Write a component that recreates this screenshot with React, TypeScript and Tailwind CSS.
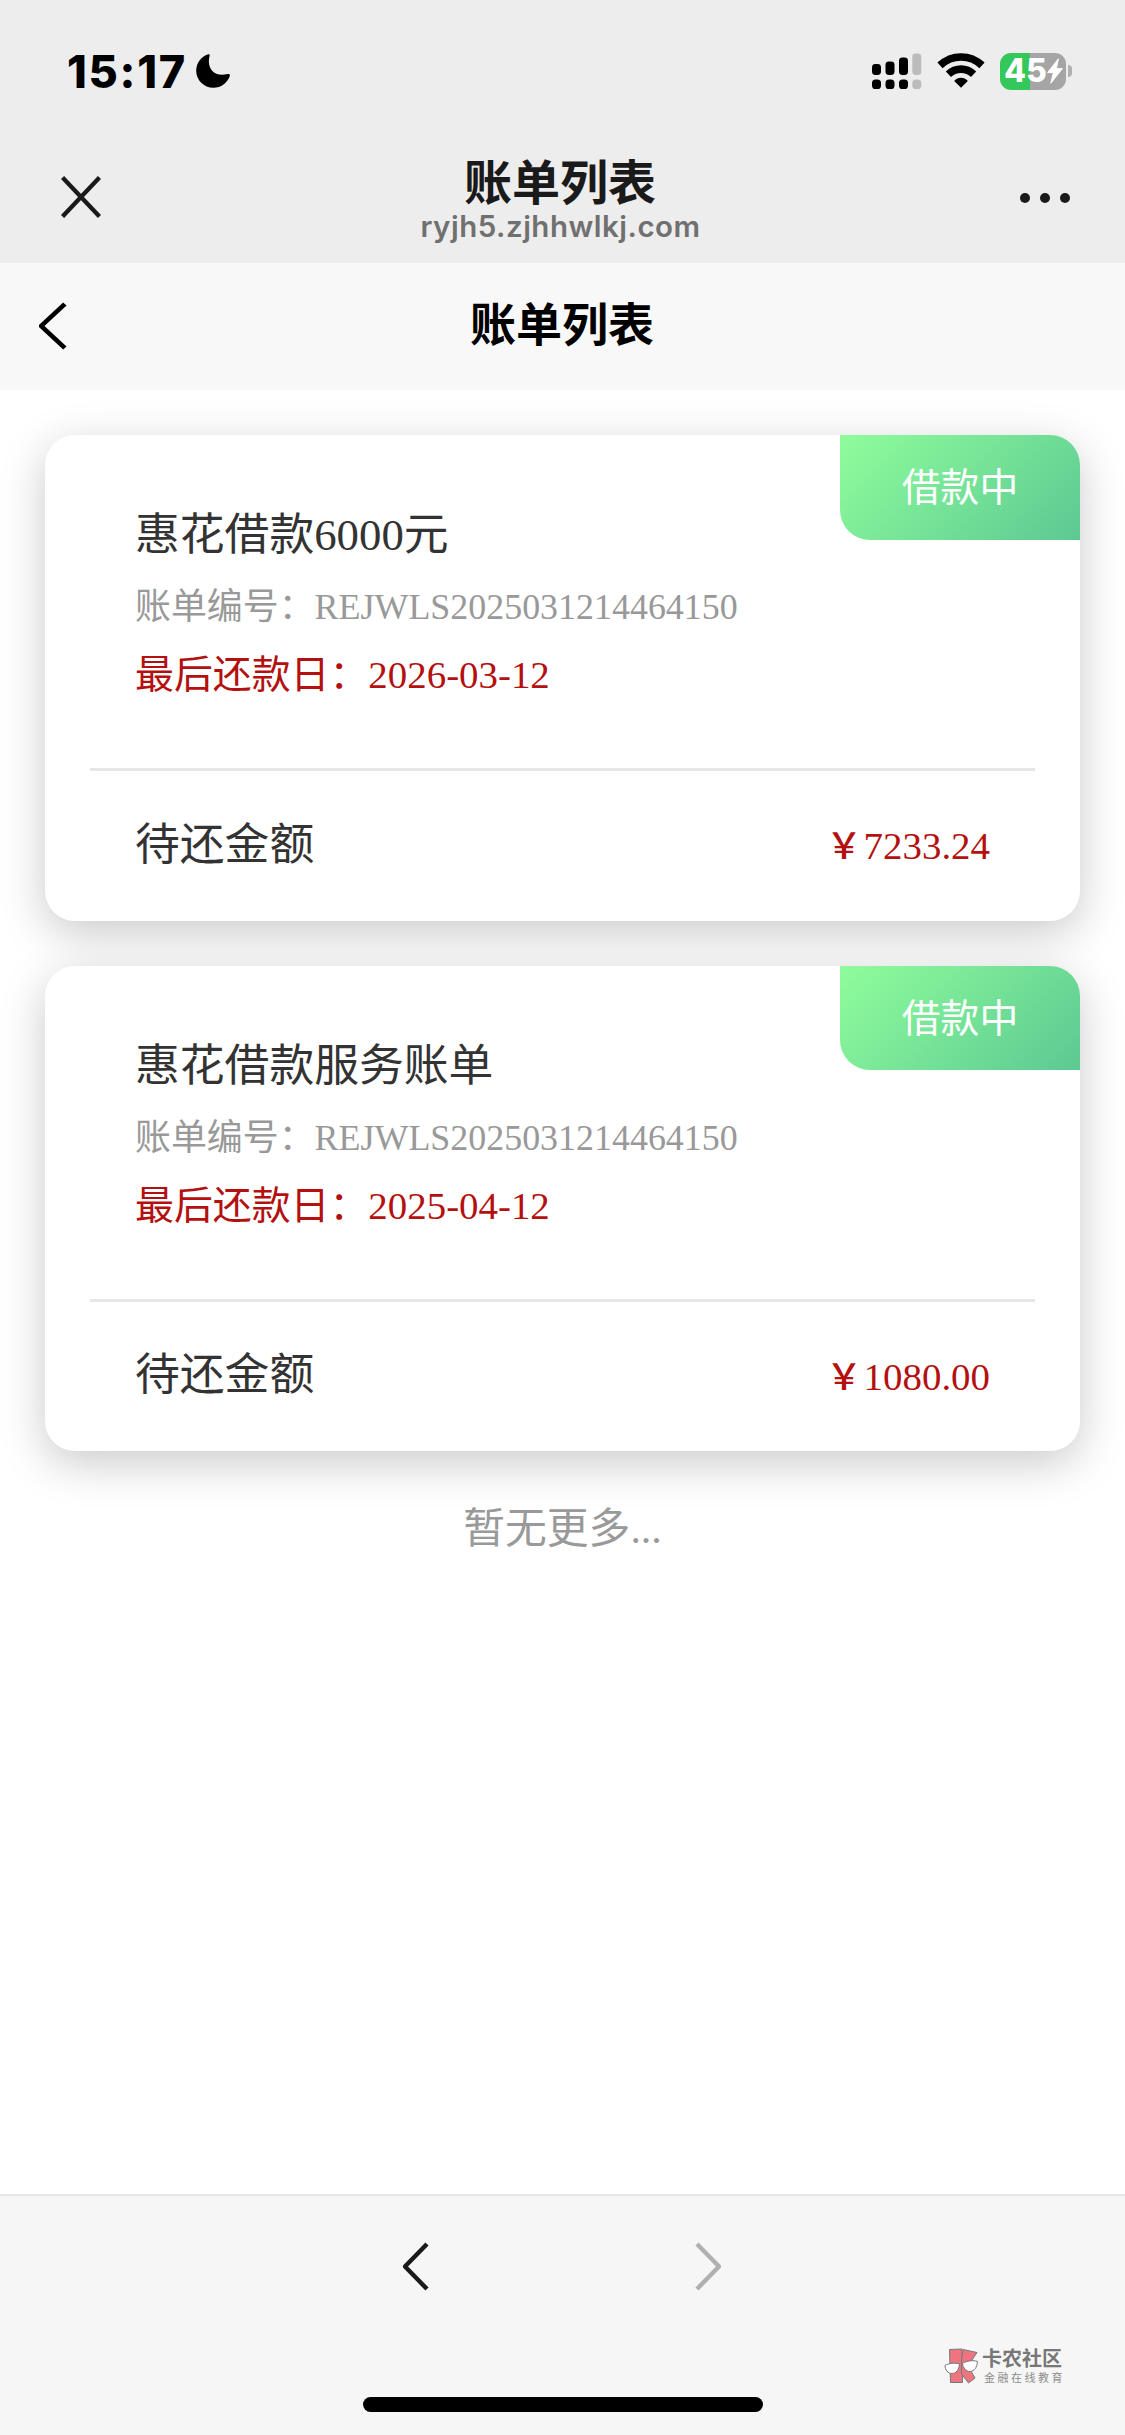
import type { ReactNode } from "react";

type Bill = {
	title: string;
	status: string;
	number: string;
	dueDate: string;
	amount: string;
};

const bills: Bill[] = [
	{
		title: "惠花借款6000元",
		status: "借款中",
		number: "REJWLS2025031214464150",
		dueDate: "2026-03-12",
		amount: "7233.24",
	},
	{
		title: "惠花借款服务账单",
		status: "借款中",
		number: "REJWLS2025031214464150",
		dueDate: "2025-04-12",
		amount: "1080.00",
	},
];

function Chevron({ className, flip = false }: { className: string; flip?: boolean }) {
	return (
		<svg viewBox="0 0 26 50" fill="none" preserveAspectRatio="none" className={className}>
			<path
				d={flip ? "M2 2L24 25L2 48" : "M24 2L2 25L24 48"}
				stroke="currentColor"
				strokeWidth="4.4"
				strokeLinejoin="round"
			/>
		</svg>
	);
}

function StatusBar() {
	return (
		<div className="flex h-[142px] items-center justify-between pl-[67px] pr-[53px]">
			<div className="flex items-center">
				<span className="w-[129px] whitespace-nowrap text-[45px] leading-none font-extrabold tracking-[1.7px] text-black">
					15:17
				</span>
				<svg viewBox="0 0 34 34" className="h-[34px] w-[34px]">
					<path
						d="M11.6 0.6C13 -0.2 14.2 0.4 13.6 1.8C10.6 12.6 16.6 23.6 31.8 20C33.4 19.6 34.2 20.6 33.8 22C31.4 29 25 33.8 17.4 33.8C7.8 33.8 0.2 26.2 0.2 16.8C0.2 9.4 4.8 3 11.6 0.6Z"
						fill="#000"
					/>
				</svg>
			</div>
			<div className="flex items-center">
				<svg viewBox="0 0 50 36" className="h-[36px] w-[50px]">
					<g fill="#000">
						<rect x="0" y="11" width="9" height="11" rx="3.4" />
						<rect x="13.5" y="8.5" width="9" height="13.5" rx="3.4" />
						<rect x="27" y="4.5" width="9" height="17.5" rx="3.4" />
						<rect x="0" y="26.5" width="9" height="9.5" rx="3.6" />
						<rect x="13.5" y="26.5" width="9" height="9.5" rx="3.6" />
						<rect x="27" y="26.5" width="9" height="9.5" rx="3.6" />
					</g>
					<g fill="#bcbcbc">
						<rect x="40.3" y="0.5" width="9" height="21.5" rx="3.4" />
						<rect x="40.3" y="26.5" width="9" height="9.5" rx="3.6" />
					</g>
				</svg>
				<svg viewBox="0 0 48 36" className="ml-[14.5px] h-[36px] w-[48px]">
					<g fill="none" stroke="#000" strokeWidth="7.6">
						<path d="M3 12.4C15 1.2 33 1.2 45 12.4" />
						<path d="M11.4 21.2C18.6 14.4 29.4 14.4 36.6 21.2" />
					</g>
					<path d="M17.2 28C21 23.8 27 23.8 30.8 28L24 34.8Z" fill="#000" />
				</svg>
				<div className="ml-[15px] flex h-[37px] w-[66px] items-center justify-center rounded-[11px] bg-[linear-gradient(90deg,#34c759_46%,#a5a5a5_46%)] pl-[2px]">
					<span className="text-[32px] leading-none font-extrabold text-white">45</span>
					<svg viewBox="0 0 16 26" className="h-[26px] w-[16px]">
						<path
							d="M11.4 0.8L0.6 14.6H6.4L3.8 25.2L15.4 10.6H9.4Z"
							fill="#fff"
							stroke="#fff"
							strokeLinejoin="round"
						/>
					</svg>
				</div>
				<div className="ml-[2.5px] h-[12px] w-[4px] rounded-r-full bg-[#b0b0b0]" />
			</div>
		</div>
	);
}

function TitleBar() {
	return (
		<div className="flex h-[120.5px] items-start justify-between pl-[61px] pr-[55px]">
			<svg viewBox="0 0 40 42" className="mt-[34px] h-[42px] w-[40px]">
				<path d="M1.5 1.5L38.5 40.5M38.5 1.5L1.5 40.5" stroke="#1a1a1a" strokeWidth="4.4" />
			</svg>
			<div className="flex flex-col items-center pt-[16px]">
				<h1 className="pr-[1px] text-[48px] leading-[50px] font-bold text-[#1a1a1a]">账单列表</h1>
				<p className="text-[29.5px] leading-[36px] font-semibold tracking-[0.5px] text-[#707070]">
					ryjh5.zjhhwlkj.com
				</p>
			</div>
			<div className="mt-[51px] flex gap-[10px]">
				<i className="size-[10px] rounded-full bg-[#1a1a1a]" />
				<i className="size-[10px] rounded-full bg-[#1a1a1a]" />
				<i className="size-[10px] rounded-full bg-[#1a1a1a]" />
			</div>
		</div>
	);
}

function Row({ children, className }: { children: ReactNode; className: string }) {
	return <p className={`whitespace-nowrap ${className}`}>{children}</p>;
}

function BillCard({ bill }: { bill: Bill }) {
	return (
		<section className="relative h-[485.5px] rounded-[30px] bg-white px-[45px] shadow-[0_12px_45px_rgba(0,0,0,0.21)]">
			<div className="absolute top-0 right-0 flex h-[104.5px] w-[240px] items-center justify-center rounded-tr-[30px] rounded-bl-[30px] bg-[linear-gradient(135deg,#8ffd9b_0%,#5cc993_100%)] pt-[2px] text-[38.8px] text-white">
				{bill.status}
			</div>
			<div className="h-[333px] px-[45px] pt-[70px]">
				<Row className="text-[44.8px] leading-[60px] text-[#333]">{bill.title}</Row>
				<Row className="mt-[15px] text-[35.93px] leading-[54px] text-[#999]">账单编号：{bill.number}</Row>
				<Row className="mt-[12px] text-[38.9px] leading-[58px] text-[#b3100f]">最后还款日：{bill.dueDate}</Row>
			</div>
			<div className="h-[3px] bg-[#e6e6e6]" />
			<div className="flex h-[147px] items-center justify-between px-[45px]">
				<span className="text-[44.8px] leading-[60px] text-[#333]">待还金额</span>
				<span className="flex items-baseline pt-[4px] text-[38.9px] leading-[60px] text-[#b3100f]">
					<span className="w-[39px] text-center text-[36px] font-medium">￥</span>
					{bill.amount}
				</span>
			</div>
		</section>
	);
}

function Watermark() {
	return (
		<div className="flex items-center gap-[4px] font-['Liberation_Sans','Noto_Sans_CJK_SC',sans-serif]">
			<svg viewBox="0 0 34 36" className="h-[36px] w-[34px]">
				<g stroke="#777" strokeWidth="1" strokeLinejoin="round">
					<path d="M5.5 1.5L18 1L18.5 34.5L6.5 34.5Z" fill="#ee7480" />
					<path d="M19 1.5L33 4.5L24 18L31 30L24.5 35L17.5 26L17.5 12Z" fill="#ee7480" />
					<path d="M1 17.5C5 15 11 14.5 15.5 16C15 22 12 25.5 8 25.5C4 25.5 1 22 1 17.5Z" fill="#fff" />
					<path d="M18.5 15.5C23 12.5 29 12 33.5 13.5C33 19.5 30.5 23 26 23.5C22 23.5 19 20 18.5 15.5Z" fill="#fff" />
				</g>
			</svg>
			<div className="flex flex-col pt-[2px]">
				<span className="text-[20px] leading-[22px] font-bold text-[#777]">卡农社区</span>
				<span className="pl-[2px] text-[11px] leading-[16px] tracking-[2.5px] text-[#8c8c8c]">金融在线教育</span>
			</div>
		</div>
	);
}

export default function App() {
	return (
		<div className="flex h-[2435px] w-[1125px] flex-col overflow-hidden bg-white font-['Liberation_Serif','Noto_Sans_CJK_SC',serif]">
			<header className="bg-[#ededed] font-[Inter,'Noto_Sans_CJK_SC',sans-serif]">
				<StatusBar />
				<TitleBar />
			</header>

			<nav className="grid h-[127px] grid-cols-[1fr_auto_1fr] items-center bg-[#f8f8f8] pl-[39px] pr-[40px]">
				<Chevron className="h-[48px] w-[28px] text-black" />
				<h2 className="pb-[10px] font-['Noto_Sans_CJK_SC',sans-serif] text-[46px] leading-[60px] font-bold text-black">
					账单列表
				</h2>
			</nav>

			<main className="flex flex-1 flex-col gap-[45px] px-[45px] pt-[45.5px]">
				{bills.map((bill) => (
					<BillCard key={bill.title} bill={bill} />
				))}
				<p className="mt-[3px] text-center text-[41.8px] leading-[60px] text-[#999]">暂无更多...</p>
			</main>

			<footer className="flex h-[241px] flex-col border-t-2 border-[#e6e6e6] bg-[#f6f6f6]">
				<div className="flex justify-center gap-[266px] pt-[46px] pr-[1px]">
					<Chevron className="h-[49px] w-[26px] text-[#1a1a1a]" />
					<Chevron flip className="h-[49px] w-[26px] text-[#b0b0b0]" />
				</div>
				<div className="mt-[55px] flex justify-end pr-[60px]">
					<Watermark />
				</div>
				<div className="mx-auto mt-[11px] h-[15px] w-[400px] rounded-full bg-black" />
			</footer>
		</div>
	);
}
